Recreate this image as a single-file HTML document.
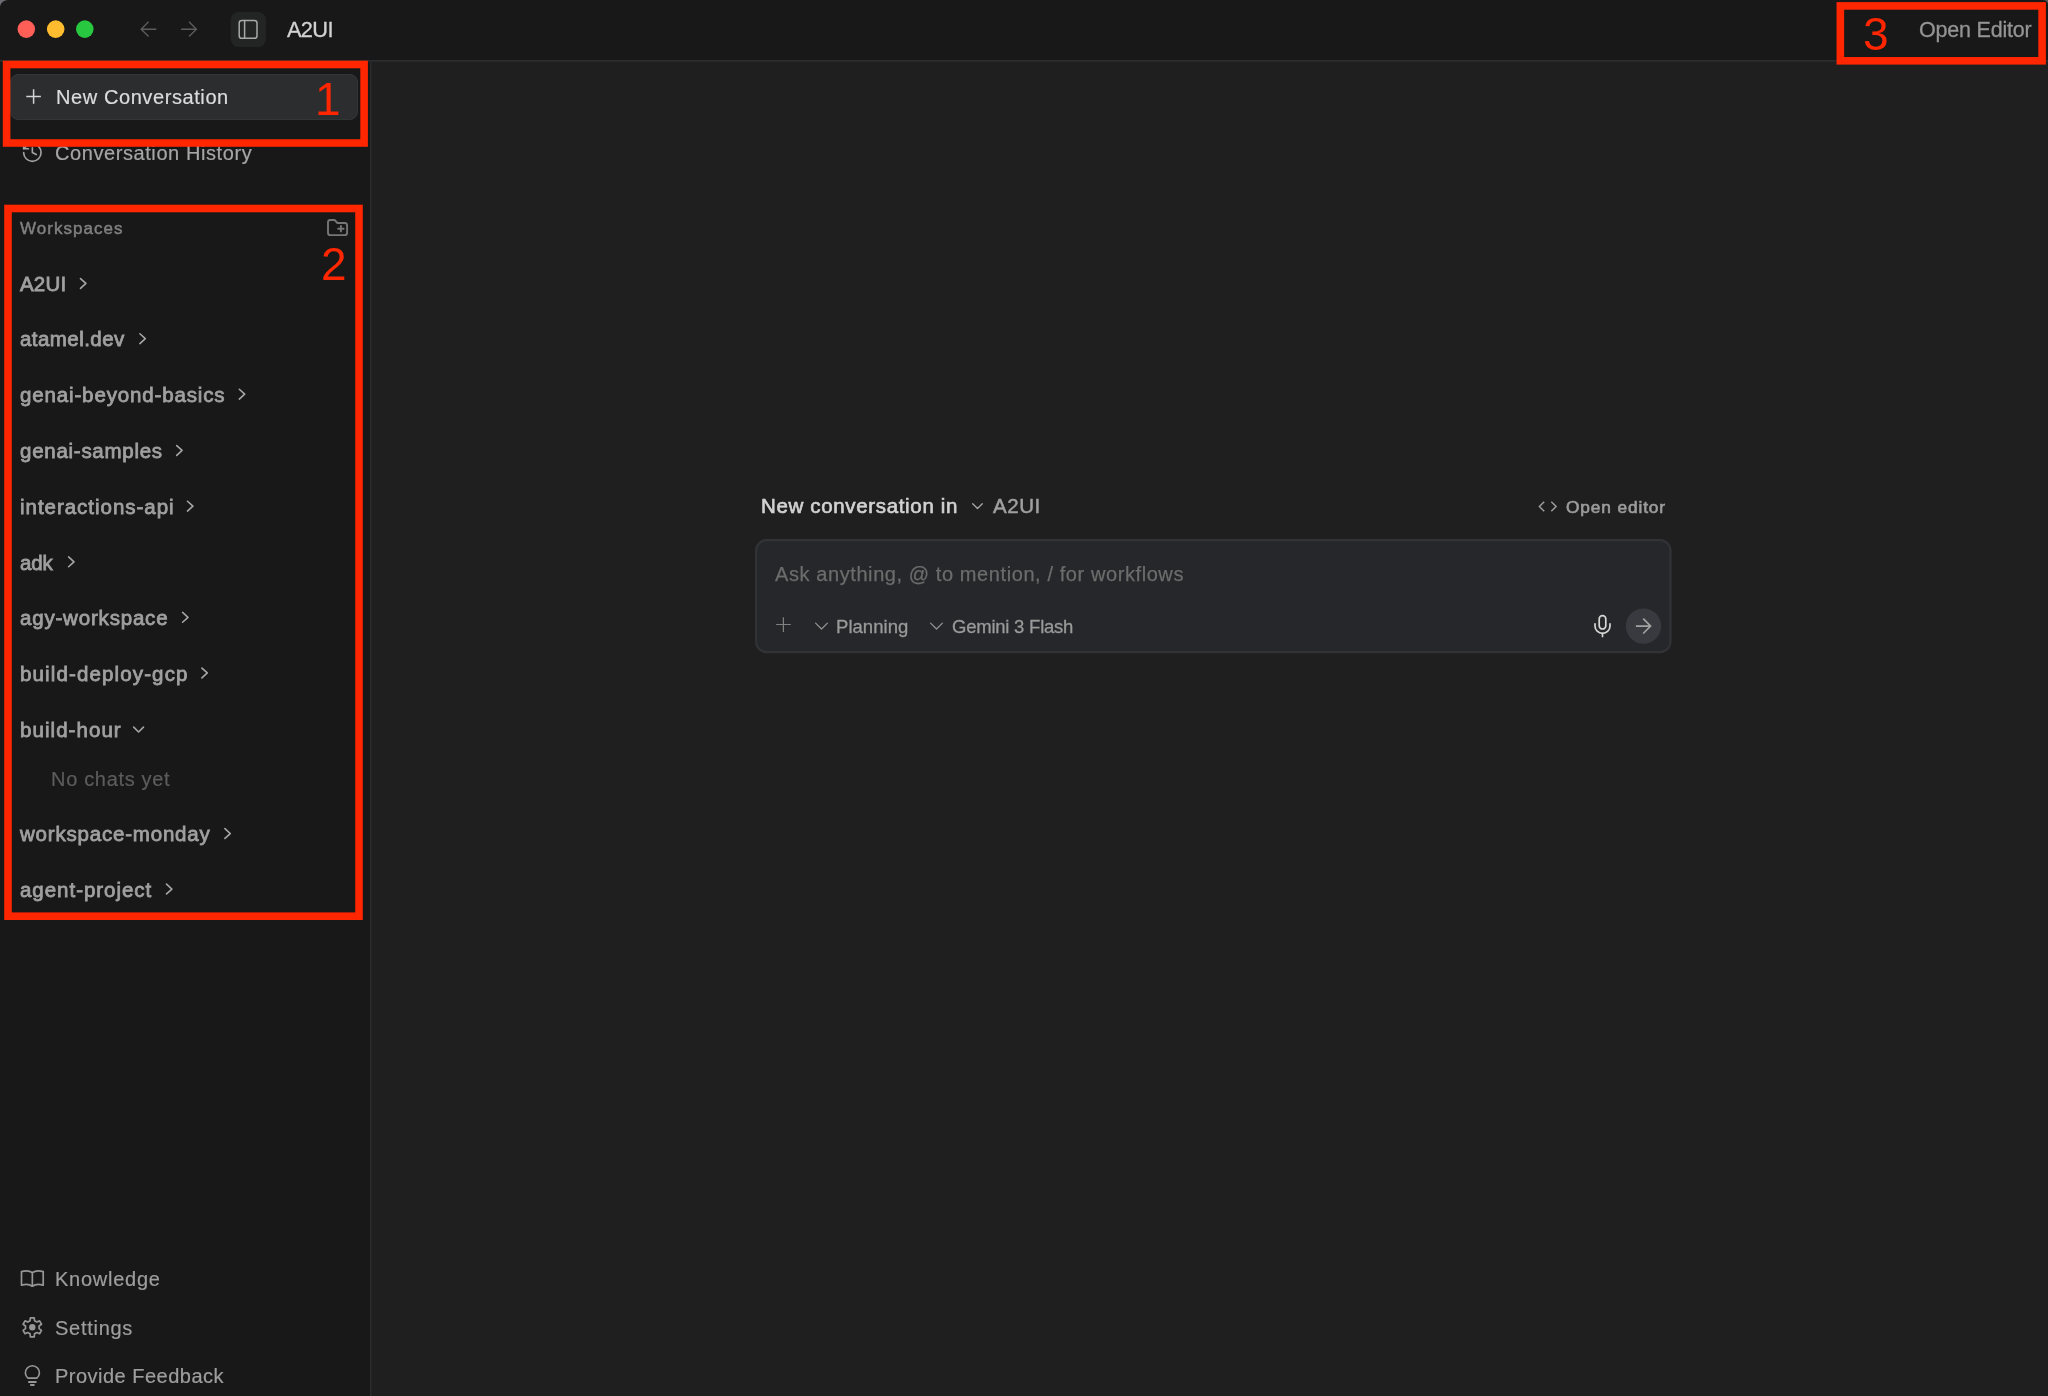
<!DOCTYPE html>
<html lang="en">
<head>
<meta charset="utf-8">
<title>A2UI</title>
<style>
*{box-sizing:border-box;margin:0;padding:0}
html,body{width:2048px;height:1396px;overflow:hidden;background:#1f1f1f}
body{position:relative;font-family:"Liberation Sans",sans-serif;color:#b4b4b4}
.abs{position:absolute}
.t{position:absolute;white-space:nowrap;line-height:1;will-change:transform}
#titlebar{left:0;top:0;width:2048px;height:60px;background:#181818}
#titleline{left:0;top:60px;width:2048px;height:2px;background:linear-gradient(#2c2d2f 0 50%,#262728 50% 100%)}
#sidebar{left:0;top:62px;width:370px;height:1334px;background:#181818}
#sideline{left:370px;top:61px;width:2px;height:1335px;background:linear-gradient(90deg,#2b2c2e 0 50%,#232425 50% 100%)}
svg{position:absolute;overflow:visible}
.ic{fill:none;stroke-linecap:round;stroke-linejoin:round}
</style>
</head>
<body>
<!-- chrome -->
<div id="titlebar" class="abs"></div>
<div id="sidebar" class="abs"></div>
<div id="sideline" class="abs"></div>
<div id="titleline" class="abs"></div>

<!-- traffic lights -->
<svg style="left:0;top:0" width="120" height="60" viewBox="0 0 120 60"><circle cx="26.3" cy="29.1" r="8.800" fill="#ff5f57"/><circle cx="55.7" cy="29.1" r="8.800" fill="#febc2e"/><circle cx="84.8" cy="29.1" r="8.800" fill="#28c840"/></svg>

<!-- nav arrows -->

<!-- sidebar toggle -->
<svg style="left:0;top:0" width="300" height="60" viewBox="0 0 300 60"><rect x="230.7" y="12" width="35.200" height="35.100" rx="8" fill="#232525"/></svg>
<span class="t" id="ttl" style="left:287.00px;top:19px;font-size:21.8px;color:#d2d2d2;letter-spacing:-0.667px;-webkit-text-stroke:0.3px #d2d2d2">A2UI</span>
<span class="t" id="openEd" style="left:1918.80px;top:20px;font-size:21.5px;color:#949494;letter-spacing:-0.205px;-webkit-text-stroke:0.3px #949494">Open Editor</span>

<!-- new conversation button -->
<div class="abs" style="left:10px;top:74px;width:348px;height:46px;border-radius:8px;background:#2c2d2f;border:1px solid #343537"></div>
<span class="t" id="newconv" style="left:56.20px;top:87px;font-size:20px;color:#dcdcdc;letter-spacing:0.587px;-webkit-text-stroke:0.2px #dcdcdc">New Conversation</span>

<!-- conversation history -->
<span class="t" id="convhist" style="left:55.00px;top:143px;font-size:20px;color:#a6a6a6;letter-spacing:0.579px;-webkit-text-stroke:0.2px #a6a6a6">Conversation History</span>

<!-- workspaces -->
<span class="t" id="wsh" style="left:19.70px;top:220px;font-size:17px;color:#808080;letter-spacing:1.033px;-webkit-text-stroke:0.45px #808080">Workspaces</span>

<span class="t" id="w0" style="left:20.00px;top:274px;font-size:20.5px;color:#a0a0a0;letter-spacing:0.200px;-webkit-text-stroke:0.8px #a0a0a0">A2UI</span>
<span class="t" id="w1" style="left:20.00px;top:329px;font-size:20.5px;color:#a0a0a0;letter-spacing:0.444px;-webkit-text-stroke:0.8px #a0a0a0">atamel.dev</span>
<span class="t" id="w2" style="left:20.00px;top:385px;font-size:20.5px;color:#a0a0a0;letter-spacing:0.856px;-webkit-text-stroke:0.8px #a0a0a0">genai-beyond-basics</span>
<span class="t" id="w3" style="left:20.00px;top:441px;font-size:20.5px;color:#a0a0a0;letter-spacing:0.733px;-webkit-text-stroke:0.8px #a0a0a0">genai-samples</span>
<span class="t" id="w4" style="left:20.00px;top:497px;font-size:20.5px;color:#a0a0a0;letter-spacing:0.973px;-webkit-text-stroke:0.8px #a0a0a0">interactions-api</span>
<span class="t" id="w5" style="left:20.00px;top:553px;font-size:20.5px;color:#a0a0a0;letter-spacing:-0.150px;-webkit-text-stroke:0.8px #a0a0a0">adk</span>
<span class="t" id="w6" style="left:20.00px;top:608px;font-size:20.5px;color:#a0a0a0;letter-spacing:0.808px;-webkit-text-stroke:0.8px #a0a0a0">agy-workspace</span>
<span class="t" id="w7" style="left:20.00px;top:664px;font-size:20.5px;color:#a0a0a0;letter-spacing:1.133px;-webkit-text-stroke:0.8px #a0a0a0">build-deploy-gcp</span>
<span class="t" id="w8" style="left:20.00px;top:720px;font-size:20.5px;color:#a0a0a0;letter-spacing:1.056px;-webkit-text-stroke:0.8px #a0a0a0">build-hour</span>
<span class="t" id="nochats" style="left:51.20px;top:769px;font-size:20px;color:#5c5c5c;letter-spacing:0.682px;-webkit-text-stroke:0.2px #5c5c5c">No chats yet</span>
<span class="t" id="w9" style="left:20.00px;top:824px;font-size:20.5px;color:#a0a0a0;letter-spacing:0.800px;-webkit-text-stroke:0.8px #a0a0a0">workspace-monday</span>
<span class="t" id="w10" style="left:20.00px;top:880px;font-size:20.5px;color:#a0a0a0;letter-spacing:0.967px;-webkit-text-stroke:0.8px #a0a0a0">agent-project</span>

<!-- bottom nav -->
<span class="t" id="know" style="left:55.30px;top:1269px;font-size:20px;color:#9e9e9e;letter-spacing:0.737px;-webkit-text-stroke:0.2px #9e9e9e">Knowledge</span>
<span class="t" id="sett" style="left:55.30px;top:1318px;font-size:20px;color:#9e9e9e;letter-spacing:0.729px;-webkit-text-stroke:0.2px #9e9e9e">Settings</span>
<span class="t" id="feed" style="left:55.30px;top:1366px;font-size:20px;color:#9e9e9e;letter-spacing:0.487px;-webkit-text-stroke:0.2px #9e9e9e">Provide Feedback</span>

<!-- main -->
<span class="t" id="nci" style="left:761.00px;top:496px;font-size:20.5px;color:#d2d2d2;letter-spacing:0.656px;-webkit-text-stroke:0.65px #d2d2d2">New conversation in</span>
<span class="t" id="nciws" style="left:992.70px;top:496px;font-size:20.5px;color:#a0a0a0;letter-spacing:0.533px;-webkit-text-stroke:0.5px #a0a0a0">A2UI</span>
<span class="t" id="opened" style="left:1565.80px;top:499px;font-size:17.3px;color:#9c9c9c;letter-spacing:0.880px;-webkit-text-stroke:0.65px #9c9c9c">Open editor</span>

<svg style="left:0;top:0" width="2048" height="700" viewBox="0 0 2048 700"><rect x="756.1" y="540.1" width="914.4" height="112" rx="10.5" fill="#26272a" stroke="#323336" stroke-width="2.1"/></svg>
<span class="t" id="ph" style="left:775.40px;top:564px;font-size:20px;color:#6c6c6c;letter-spacing:0.586px;-webkit-text-stroke:0.25px #6c6c6c">Ask anything, @ to mention, / for workflows</span>
<span class="t" id="plan" style="left:835.90px;top:618px;font-size:18.5px;color:#9a9a9a;letter-spacing:0.043px;-webkit-text-stroke:0.3px #9a9a9a">Planning</span>
<span class="t" id="gem" style="left:952.00px;top:618px;font-size:18.5px;color:#9a9a9a;letter-spacing:-0.231px;-webkit-text-stroke:0.3px #9a9a9a">Gemini 3 Flash</span>

<svg class="ic" style="left:0;top:0" width="2048" height="1396" viewBox="0 0 2048 1396">
<!-- nav arrows -->
<g stroke="#5c5c5c" stroke-width="1.4" stroke-linecap="butt" stroke-linejoin="miter">
<path d="M156.3 29.2H141.6M148.6 21.8L141.2 29.2L148.6 36.600"/>
<path d="M181.1 29.2H196.4M189 21.8L196.4 29.2L189 36.6"/>
</g>
<!-- sidebar toggle -->
<g stroke="#a8a8a8" stroke-width="1.5"><rect x="239.2" y="20.5" width="17.800" height="17.800" rx="2.600"/><path d="M244.600 20.500V38.300"/></g>
<!-- plus (new conversation) -->
<path stroke="#d4d4d4" stroke-width="1.5" stroke-linecap="butt" d="M33.6 89.2V103.800M26.300 96.500H40.900"/>
<!-- history -->
<g transform="translate(20.75 141) scale(0.967)" stroke="#a2a2a2" stroke-width="1.700"><path d="M3 12a9 9 0 1 0 9-9 9.750 9.750 0 0 0-6.740 2.740L3 8"/><path d="M3 3v5h5"/><path d="M12 7v5l4 2"/></g>
<!-- folder plus -->
<g stroke="#767676" stroke-width="1.9"><path d="M328 222.4A2.4 2.4 0 0 1 330.4 220H334.6L337.400 223H344.700A2.400 2.400 0 0 1 347.100 225.400V232.700A2.400 2.400 0 0 1 344.700 235.100H330.400A2.400 2.400 0 0 1 328 232.700Z"/><path d="M340.9 226V231.400M338.200 228.700H343.600"/></g>
<!-- book -->
<g stroke="#969696" stroke-width="1.700"><path d="M32.350 1272.600C29.500 1270.600 25 1270.600 21.500 1271.600V1285.200C25 1284.200 29.500 1284.200 32.350 1286.200"/><path d="M32.350 1272.600C35.200 1270.600 39.700 1270.600 43.200 1271.600V1285.200C39.700 1284.200 35.200 1284.200 32.350 1286.200"/><path d="M32.350 1272.600V1286.200"/></g>
<!-- gear -->
<path stroke="#969696" stroke-width="1.700" d="M30.050 1320.780L30.370 1317.790L34.230 1317.790L34.550 1320.780L36.830 1322.090L39.560 1320.870L41.500 1324.220L39.070 1325.980L39.070 1328.620L41.500 1330.380L39.560 1333.730L36.830 1332.510L34.550 1333.820L34.230 1336.810L30.370 1336.810L30.050 1333.820L27.770 1332.510L25.040 1333.730L23.100 1330.380L25.530 1328.620L25.530 1325.980L23.100 1324.220L25.040 1320.870L27.770 1322.090Z"/>
<circle cx="32.300" cy="1327.300" r="3.200" fill="#969696" stroke="none"/>
<!-- bulb -->
<g stroke="#969696" stroke-width="1.700"><path d="M28 1378.200A7 7 0 1 1 36.800 1378.200Z"/><path stroke-width="2" stroke-linecap="butt" d="M28.200 1381.900H36.500M30.200 1385.100H34.500"/></g>
<!-- main header chevron + code icon -->
<path stroke="#a8a8a8" stroke-width="1.300" d="M972.700 503.700L977.500 508.500L982.300 503.700"/>
<path stroke="#9c9c9c" stroke-width="1.500" stroke-linecap="butt" stroke-linejoin="miter" d="M1544.200 501.700L1539.400 506.500L1544.200 511.300M1551.300 501.700L1556.100 506.500L1551.300 511.300"/>
<!-- input toolbar -->
<path stroke="#808080" stroke-width="1.200" stroke-linecap="butt" d="M783.400 617.200V631.900M776.100 624.500H790.800"/>
<g stroke="#909090" stroke-width="1.300"><path d="M815.600 623.100L821.500 629L827.400 623.100"/><path d="M930.600 623.100L936.500 629L942.400 623.100"/></g>
<!-- mic -->
<g stroke="#d6d6d6" stroke-width="1.700"><rect x="1599.200" y="615.700" width="6.600" height="13.300" rx="3.300"/><path d="M1595 623.800V625.900A7.500 7.500 0 0 0 1610 625.900V623.800"/><path d="M1602.500 633.400V636.400"/></g>
<!-- send -->
<circle cx="1643.500" cy="626.100" r="17.700" fill="#393a3f" stroke="none"/>
<path stroke="#a2a2a2" stroke-width="1.700" stroke-linecap="butt" stroke-linejoin="miter" d="M1635.900 626.100H1650.500M1643.200 618.700L1650.600 626.100L1643.200 633.500"/>
<g stroke="#a6a6a6" stroke-width="1.6"><path d="M80.50 278.55L85.90 283.45L80.50 288.35"/><path d="M139.90 333.75L145.30 338.65L139.90 343.55"/><path d="M239.30 389.25L244.70 394.15L239.30 399.05"/><path d="M176.70 445.55L182.10 450.45L176.70 455.35"/><path d="M187.50 501.25L192.90 506.15L187.50 511.05"/><path d="M68.60 556.95L74.00 561.85L68.60 566.75"/><path d="M182.60 612.45L188.00 617.35L182.60 622.25"/><path d="M201.90 668.05L207.30 672.95L201.90 677.85"/><path d="M133.70 727.15L138.60 731.95L143.50 727.15"/><path d="M224.90 828.65L230.30 833.55L224.90 838.45"/><path d="M166.50 884.15L171.90 889.05L166.50 893.95"/></g>
</svg>
<!-- annotation boxes -->
<svg style="left:0;top:0" width="2048" height="1396" viewBox="0 0 2048 1396" fill="none" stroke="#ff2600" stroke-width="7.6">
<rect x="6.6" y="64.5" width="357.5" height="78.5"/>
<rect x="8" y="208.5" width="351" height="707.7"/>
<rect x="1840.35" y="5.9" width="201.75" height="54.9"/>
</svg>
<span class="t" id="n1" style="left:315.00px;top:76px;font-size:46px;color:#ff2600;letter-spacing:0.000px">1</span>
<span class="t" id="n2" style="left:321.00px;top:241px;font-size:46px;color:#ff2600;letter-spacing:0.000px">2</span>
<span class="t" id="n3" style="left:1862.50px;top:11px;font-size:46px;color:#ff2600;letter-spacing:0.000px">3</span>
<svg style="left:0;top:0" width="2048" height="12" viewBox="0 0 2048 12"><path d="M0 0H8A8 8 0 0 0 0 6.500Z" fill="#6e6b75"/><path d="M2048 0H2042.500A5.500 5.500 0 0 1 2048 4Z" fill="#5a5a5a"/></svg>
</body>
</html>
